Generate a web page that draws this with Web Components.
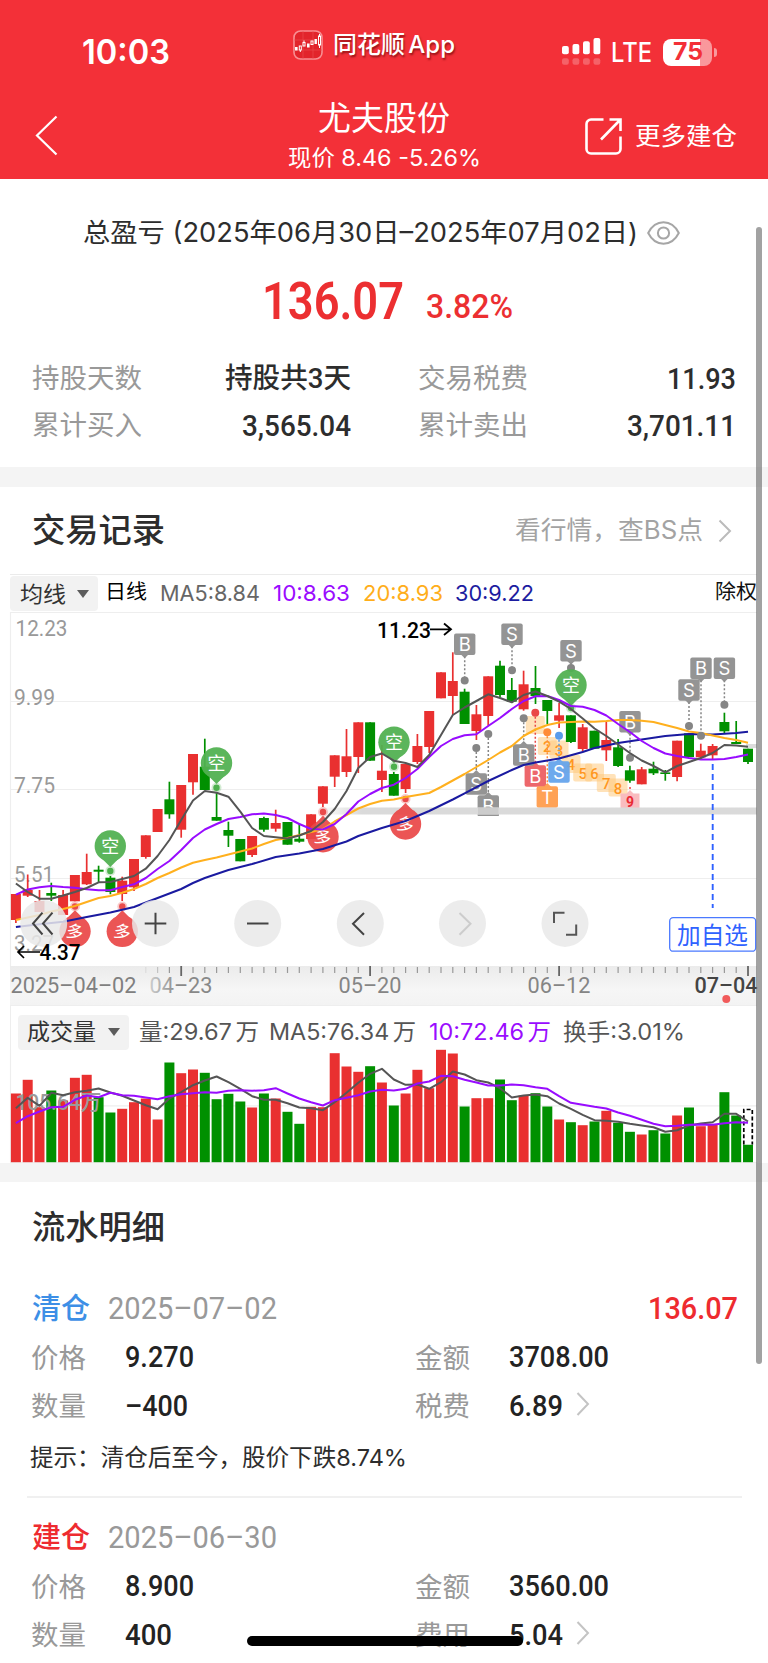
<!DOCTYPE html>
<html lang="zh-CN">
<head>
<meta charset="utf-8">
<title>尤夫股份</title>
<style>
html,body{margin:0;padding:0;background:#fff}
body{width:768px;height:1663px;overflow:hidden;font-family:Inter,"Noto Sans CJK SC",sans-serif;color:#2d2d2d}
</style>
</head>
<body>
<trade-page></trade-page>
<script>
const define = (name, html, extra) => {
  const t = document.createElement('template');
  t.innerHTML = html;
  customElements.define(name, class extends HTMLElement {
    constructor() { super(); this.attachShadow({mode: 'open'}).append(t.content.cloneNode(true)); if (extra) extra.call(this, this.shadowRoot); }
  });
};

/* ---------- page ---------- */
define('trade-page', `
<style>
:host{display:block;position:relative;width:768px;height:1663px;overflow:hidden;background:#fff}
.band{height:20px;background:#f4f4f4}
.scroll{position:absolute;left:756px;top:227px;width:6px;height:1137px;border-radius:3px;background:rgba(110,110,110,.64)}
.home{position:absolute;left:247px;top:1636px;width:276px;height:10px;border-radius:5px;background:#000}
</style>
<status-bar></status-bar>
<nav-bar></nav-bar>
<profit-summary></profit-summary>
<div class="band"></div>
<record-head></record-head>
<price-chart></price-chart>
<volume-chart></volume-chart>
<div class="band" style="height:19px"></div>
<flow-list></flow-list>
<div class="scroll"></div>
<div class="home"></div>`);

/* ---------- status bar ---------- */
define('status-bar', `
<style>
:host{display:flex;align-items:center;height:100px;padding-top:2px;background:#f33038;color:#fff}
.t{margin:1px 0 0 82px}
.app{display:flex;align-items:center;width:162px;margin:-14px 0 0 123px;gap:10px;text-shadow:1px 2px 2px rgba(90,0,0,.6)}
.sig{margin:-1px 0 0 107px}
.lte{margin-left:10px}
.bat{margin-left:11px;position:relative;width:49px;height:27px;border-radius:8px;background:linear-gradient(90deg,#fff 37px,rgba(255,255,255,.5) 37px);display:flex;align-items:center;justify-content:center}
.nub{width:3px;height:9px;margin-left:1.5px;border-radius:0 3px 3px 0;background:rgba(255,255,255,.5)}
svg{display:block}
</style>
<fit-text class="t" w="88" size="33.5" weight="600">10:03</fit-text>
<div class="app">
<svg width="30" height="30" viewBox="0 0 30 30"><rect x="1" y="1" width="28" height="28" rx="6.5" fill="#e2242b" stroke="#f88f93" stroke-width="1.6"/><path d="M1 10h28M1 20h28M10 1v28M20 1v28" stroke="#ef4d52" stroke-width=".6"/><g fill="#fff"><rect x="2" y="17" width="2.6" height="3.5"/><rect x="14" y="13.500" width="2.600" height="4"/><rect x="21.500" y="9" width="2.400" height="5"/></g><g fill="none" stroke="#fff" stroke-width="1"><rect x="6.300" y="16" width="2" height="4"/><rect x="10" y="12.500" width="2" height="3.500"/><rect x="18" y="11" width="2" height="3.500"/><rect x="25.500" y="6" width="2" height="9"/><path d="M7.300 20v2M11 10.500v2M26.500 4v2M26.500 15v3"/></g></svg>
<fit-text w="122" size="24" weight="500" style="word-spacing:-3px">同花顺 App</fit-text>
</div>
<svg class="sig" width="39" height="27" viewBox="0 0 39 27"><g fill="#fff"><rect x="0" y="8" width="6.800" height="8.300" rx="2"/><rect x="10.500" y="6" width="6.800" height="10.300" rx="2"/><rect x="21" y="3.300" width="6.800" height="13" rx="2"/><rect x="31.500" y="0" width="6.800" height="16.300" rx="2"/></g><g fill="#fff" opacity=".24"><rect x="0" y="20.300" width="6.800" height="6.400" rx="2"/><rect x="10.500" y="20.300" width="6.800" height="6.400" rx="2"/><rect x="21" y="20.300" width="6.800" height="6.400" rx="2"/><rect x="31.500" y="20.300" width="6.800" height="6.400" rx="2"/></g></svg>
<fit-text class="lte" w="41" size="26.500" weight="500" style="margin-top:1px">LTE</fit-text>
<div class="bat"><fit-text w="30" size="24" weight="700" style="color:#f33038">75</fit-text></div><div class="nub"></div>`);

/* ---------- navigation bar ---------- */
define('nav-bar', `
<style>
:host{display:grid;grid-template-columns:258px 252px 1fr;height:77px;background:#f33038;color:#fff}
svg{display:block}
.back{margin:13px 0 0 35px}
.mid{display:flex;flex-direction:column;align-items:center;gap:12px}
.more{display:flex;align-items:flex-start;padding:16px 0 0 74.500px;gap:13px}
</style>
<svg class="back" width="24" height="41" viewBox="0 0 24 41"><path d="M21.500 1.500L2 20.500L21.500 39.500" fill="none" stroke="#fff" stroke-width="2.200"/></svg>
<div class="mid"><fit-text w="132" size="33">尤夫股份</fit-text><fit-text w="193" size="22.500">现价 8.46 -5.26%</fit-text></div>
<div class="more"><svg width="37" height="37" viewBox="0 0 37 37" fill="none" stroke="#fff" stroke-width="2.600"><path d="M18.500 1.500H6a4.500 4.500 0 0 0-4.500 4.500V31a4.500 4.500 0 0 0 4.500 4.500H31a4.500 4.500 0 0 0 4.500-4.500V18.500"/><path d="M24.500 1.500H35.500V13M35 2L16 21.500"/></svg><fit-text w="102" size="25.500" style="margin-top:5px">更多建仓</fit-text></div>`);

/* ---------- profit summary ---------- */
define('profit-summary', `
<style>
:host{display:block;height:288px}
.title{display:flex;align-items:center;height:27px;padding:40px 0 0 83px;gap:9px}
.sum{display:flex;align-items:flex-end;height:51px;padding:30px 0 0 262px;gap:22px;color:#ec2f31}
.grid{display:grid;grid-template-columns:110px 1fr 67px 110px 1fr;row-gap:18px;padding:38px 32px 0 32px}
.l{color:#999}.r{justify-self:end}.c4{grid-column:4}
</style>
<div class="title"><fit-text w="555" size="26.500">总盈亏 (2025年06月30日–2025年07月02日)</fit-text>
<svg width="33" height="24" viewBox="0 0 33 24" fill="none" stroke="#a6a6a6" stroke-width="2"><path d="M1.200 12C4.500 5.500 10 1.300 16.500 1.300S28.500 5.500 31.800 12C28.500 18.500 23 22.700 16.500 22.700S4.500 18.500 1.200 12Z"/><circle cx="16.500" cy="12" r="5.600"/></svg></div>
<div class="sum"><fit-text w="142" size="51" weight="600" f="d">136.07</fit-text><fit-text w="87" size="33.500" weight="500" f="d" style="margin-bottom:4px">3.82%</fit-text></div>
<div class="grid">
<fit-text class="l" w="110" size="27">持股天数</fit-text><fit-text class="r" w="126" size="28" weight="500" f="d">持股共3天</fit-text><fit-text class="l c4" w="110" size="27">交易税费</fit-text><fit-text class="r" w="69" size="29" weight="500" f="d">11.93</fit-text>
<fit-text class="l" w="110" size="27">累计买入</fit-text><fit-text class="r" w="109" size="29" weight="500" f="d">3,565.04</fit-text><fit-text class="l c4" w="110" size="27">累计卖出</fit-text><fit-text class="r" w="109" size="29" weight="500" f="d">3,701.11</fit-text>
</div>`);

/* ---------- section heading ---------- */
define('record-head', `
<style>
:host{display:flex;align-items:center;height:87px;padding:0 36px 0 32px}
fit-text+fit-text{margin-left:auto;color:#a3a3a3}
svg{margin-left:15px}
</style>
<fit-text w="133" size="33" weight="500">交易记录</fit-text><fit-text w="188" size="25">看行情，查BS点</fit-text>
<svg width="14" height="24" viewBox="0 0 14 24"><path d="M1.500 1.500L12 12L1.500 22.500" fill="none" stroke="#bbb" stroke-width="2"/></svg>`);

/* ---------- chip with a drop-down mark ---------- */
define('drop-chip', `
<style>
:host{display:flex;align-items:center;justify-content:center;gap:11px;height:35px;background:#f2f2f2;border-radius:4px;color:#333}
i{border:6px solid transparent;border-top:8px solid #5c5c5c;border-bottom:0}
</style><slot></slot><i></i>`);

/* ---------- chart geometry ---------- */
const X = i => +(15.9 + 11.808 * i).toFixed(1);
const R = '#e93030', G = '#009000';
const line = (ys, c, f = y => y) => `<polyline points="${ys.map((y, i) => y == null ? '' : X(i) + ',' + (+f(y).toFixed(1))).filter(Boolean).join(' ')}" fill="none" stroke="${c}" stroke-width="2" stroke-linejoin="round"/>`;
const txt = (x, y, w, s, c, size = 22, weight = 400, fam = 'Roboto') => `<text x="${x}" y="${y}" textLength="${w}" lengthAdjust="spacingAndGlyphs" fill="${c}" font-size="${size}" font-weight="${weight}" font-family="${fam},Noto Sans CJK SC,sans-serif">${s}</text>`;

/* colour, body top, body bottom, high, low */
const candles = [
'r 894 920 894 923','r 890 895.7 874.5 897','r 901 912 890 912','g 893 895.7 882.7 901','r 895 915 890 915','r 875 901.3 875 901.3','r 872 884.3 853.7 885','g 869.7 871.7 865.7 882.3','g 877.7 892 876 894.3','r 880.7 894 876.7 901','r 859 887.3 859 891','r 835.3 857 835.3 858.7','r 809 832 809 832','g 799.3 814.3 781.7 818.7','r 785 829.7 785 837.7','r 754 782.3 754 794.7','g 766.7 790 738.7 790','g 817 820.7 793 820.7','g 830 835.7 821.7 847','g 839 861.3 839 861.3','r 836 855 836 857','g 818 829.7 816.7 831.7','r 823 828.7 809.7 831.7','g 822 844.7 822 844.7','g 838.7 841.7 823.3 842.7','r 814.3 839 814.3 839','r 786.3 803.7 786.3 807','r 755.3 776.7 755.3 787','r 756.3 772 729 777','r 722.3 757 722.3 773','g 722.3 760.7 722.3 760.7','r 770.7 780 745 792','g 774 795.7 772 795.7','r 764 789 764 793','r 746 762 734 764','r 711 747 711 753','r 672.3 698.3 672.3 698.3','r 681 696 652.3 715','g 691.7 724 688.7 724','r 714.3 731 705 740','r 676.3 716 676.3 725.7','g 665.7 695 660.7 697','g 690 701.7 678 702.7','r 684.3 709.3 670.7 710.7','g 688 696 666 704','g 700 711 700 724','r 715.3 720.7 703 728','g 715.3 742 715.3 743','r 727.3 749 724 751.7','g 730.7 748.7 730.7 748.7','r 740 750.3 722 761','g 747.3 766 739 767','g 770.3 780.7 765.7 782.7','r 769.3 784.3 767 784.3','g 768.7 773.3 761.7 775','g 772.4 774 770 780.7','r 740.7 777 740.7 781.3','g 733.3 757 733.3 757','r 750.7 757.3 743.7 760','r 746 755.3 744 759.3','g 722 731.3 712.7 733','g 742 744 721 744','g 748.7 762 748.7 764'];
const ma5 = [883.5,892,898.7,898.7,895.5,892,888,882.3,882,879,876,868.7,856,840,820,800.5,791,792.7,796.7,811.7,828,836,837.3,838.5,835.5,831,822,809,791,768,757,753.5,760.7,763,767,755,735,715,707.5,701,694.3,698,702.3,695,691.5,696,701.7,709,718.5,728.5,736,744.5,753,760.5,766,772.3,766,762,758,753,745,745.5,746.7];
const ma10 = [894.7,889.5,887.3,886,887,887.7,889.3,890.3,890.3,887,884.3,878,869,861,850,838,829.5,824,819,817,814.3,813.5,815,818,824,829,829.5,824,814,801.5,794,788,784.7,778,769,757,746,739,735.3,734.3,726,718,709,701,696.3,696,700,706,706.7,710,715.5,724,732,741,748,753.5,756,758,759.5,759.5,759,757,754.5];
const ma20 = [920,917.5,915,911.5,909,906,902,898,896,892.7,889,884,878,873,867.5,862.7,860,857.5,854.5,851.5,848.5,844,840,838,835,832,829,821.5,815,808.5,804,800.7,799.5,797,795,793,787,780.5,774,767,760,752.5,746,736,729.5,725,722.5,722,721.5,721.7,721,720,720,720.7,722,725,728,731.5,733,735.5,738,740,742.7];
const ma30 = [927,,924.3,,921.7,,917,,912.5,,907,,898,,889,883,878,,870,,864,,857,,853.5,,849,,841.5,836,,828,,821,,811,,799.5,793.3,,781,,770,765,762.500,,758.5,,752,748,,743,,739.5,,736,,734,,734.5,,733,731.7];

const kong = (x, y, d) => `<circle cx="${x}" cy="${d}" r="5" fill="#4db04d" opacity=".25"/><circle cx="${x}" cy="${d}" r="3.200" fill="#4db04d"/><g opacity=".94"><path d="M${x - 9} ${y + 12}L${x} ${y + 21}L${x + 9} ${y + 12}Z" fill="#51b151"/><circle cx="${x}" cy="${y}" r="15.700" fill="#51b151"/></g>` + txt(x - 9, y + 6.500, 18, '空', '#fff', 18);
const duo = (x, y, d) => `<circle cx="${x}" cy="${d}" r="5" fill="#e93030" opacity=".25"/><circle cx="${x}" cy="${d}" r="3.200" fill="#ea4b4b"/><g opacity=".92"><path d="M${x - 9} ${y - 12}L${x} ${y - 21}L${x + 9} ${y - 12}Z" fill="#ea4747"/><circle cx="${x}" cy="${y}" r="15.700" fill="#ea4747"/></g>` + `<g transform="rotate(12 ${x} ${y})">` + txt(x - 8.500, y + 6.500, 17, '多', '#fff', 17) + '</g>';
const tag = (x, y, s, d, c = '#8c8c8c', dot = '#858585') => {
  const up = d < y, from = up ? d : y + 12, to = up ? y - 12 : d;
  return `<path d="M${x} ${from}V${to}" stroke="${dot}" stroke-width="1.500" stroke-dasharray="2 2"/><circle cx="${x}" cy="${d}" r="4" fill="${dot}"/>` +
  `<g opacity=".93"><path d="${up ? `M${x - 4} ${y - 10}l4 -4l4 4` : `M${x - 4} ${y + 10}l4 4l4 -4`}z" fill="${c}"/><rect x="${x - 10.700}" y="${y - 10.700}" width="21.400" height="21.400" rx="2" fill="${c}"/></g><text x="${x}" y="${y + 6.800}" text-anchor="middle" fill="#fff" font-size="18.500" font-family="Inter">${s}</text>`;
};
const num = (x, y, s) => `<rect x="${x - 9.500}" y="${y - 9.500}" width="19" height="18" rx="2" fill="#ffc878" opacity=".52"/>${s && `<text x="${x}" y="${y + 5.500}" text-anchor="middle" fill="#ff971f" font-size="15" font-weight="500" font-family="Roboto">${s}</text>`}`;
const round = (x, p, c = '#444') => `<circle cx="${x}" cy="923.400" r="23.500" fill="#e9e9e9" opacity=".85"/><path d="${p}" fill="none" stroke="${c}" stroke-width="2"/>`;

define('price-chart', `
<style>
:host{display:block}
.head{display:flex;align-items:center;height:37px;margin:0 11px 0 10px;border-top:1px solid #ebebeb}
.head>fit-text{position:relative;top:-1px}
drop-chip{width:88px}
.ex{margin-left:auto;color:#111}
svg{display:block}
</style>
<div class="head">
<drop-chip><fit-text w="46" size="22">均线</fit-text></drop-chip>
<fit-text w="42" size="20.500" style="margin-left:7px;color:#000">日线</fit-text>
<fit-text w="100" size="22" style="margin-left:13px;color:#666">MA5:8.84</fit-text>
<fit-text w="77" size="22" style="margin-left:13px;color:#9a0cff">10:8.63</fit-text>
<fit-text w="80" size="22" style="margin-left:13px;color:#ffae1a">20:8.93</fit-text>
<fit-text w="79" size="22" style="margin-left:12px;color:#1c1ca0">30:9.22</fit-text>
<fit-text class="ex" w="42" size="20.500">除权</fit-text>
</div><div class="plot"></div>`, function (root) {
  let s = `<svg width="768" height="393" viewBox="0 612 768 393"><defs><linearGradient id="a" x2="0" y2="1"><stop stop-color="#ebebeb"/><stop offset=".6" stop-color="#f6f6f6"/><stop offset="1" stop-color="#f3f3f3"/></linearGradient><linearGradient id="f"><stop stop-color="#dadada" stop-opacity="0"/><stop offset=".1" stop-color="#dadada"/></linearGradient><linearGradient id="k"><stop stop-color="#ccc"/><stop offset=".45" stop-color="#888"/></linearGradient><clipPath id="c"><rect x="0" y="612" width="768" height="204"/></clipPath></defs>`;
  s += `<path d="M10 612.500H757M10.500 612V966M10 701.500H757M10 789.500H757M10 878.500H757" stroke="#eee" stroke-width="1.200" fill="none"/>`;
  s += txt(15.500, 635.700, 52, '12.23', '#999') + txt(14, 704.500, 41, '9.99', '#999') + txt(14, 792.500, 41, '7.75', '#999') + txt(14, 881.500, 40, '5.51', '#999') + txt(14, 950.500, 40, '3.27', '#999');
  [[535.3,725.500,''],[547.3,746.500,'2'],[559,750,'3'],[571,764.500,'4'],[582.7,773,'5'],[594.5,773,'6'],[606.3,783.500,'7'],[618,788,'8']].forEach(a => s += num(...a));
  s += `<path d="M630 787V796" stroke="#e94040" stroke-width="1.500" stroke-dasharray="2 2"/><path d="M620.500 793.500H626.500L630 790L633.500 793.500H639.500V808.500H620.500Z" fill="#f9bcbf"/><text x="630" y="807" text-anchor="middle" fill="#e92a35" font-size="14" font-weight="700" font-family="Roboto">9</text>`;
  candles.forEach((l, i) => {
    const [c, t, b, h, w] = l.split(' '), x = X(i), k = c === 'r' ? R : G;
    s += `<path d="M${x} ${h}V${w}" stroke="${k}" stroke-width="1.700"/><rect x="${x - 5}" y="${t}" width="10" height="${+(b - t).toFixed(1)}" fill="${k}"/>`;
  });
  const fill = a => Array.from(a, v => v === undefined ? null : v);
  s += tag(630, 721.700, 'B', 757.700);
  s += tag(571, 650.700, 'S', 668);
  s += tag(535.300, 776, 'B', 712.700, '#ec5c60', '#ea4747') + tag(547.300, 797, 'T', 732.300, '#ff9b4a', '#ff8c38') + tag(559, 772, 'S', 735.700, '#62a3ec', '#5a9bea');
  s += tag(523.700, 755, 'B', 718.300) + tag(476.300, 784, 'S', 748) + `<g clip-path="url(#c)">${tag(488.300, 806, 'B', 734)}</g>`;
  s += `<rect x="318" y="807.500" width="439" height="7" fill="url(#f)"/><rect x="746" y="744" width="11" height="4" fill="#ddd"/><rect x="478" y="807.500" width="20.500" height="7" fill="#ccc"/>`;
  s += `<path d="M712.700 764V908" stroke="#2f62ff" stroke-width="1.900" stroke-dasharray="6 4"/>`;
  s += kong(110.300, 846, 871) + kong(216.500, 763, 787.700) + kong(394, 742.300, 766.700) + kong(571, 685, 708);
  s += duo(75, 931.300, 906.500) + duo(122.300, 931.300, 906.500) + duo(323, 836.700, 812) + duo(405.500, 824, 799);
  s += line(fill(ma30), '#1a1aa0') + line(ma20, '#ffb01e') + line(ma10, '#980cff') + line(ma5, '#555');
  s += tag(464.700, 644.300, 'B', 680.500) + tag(512, 634.300, 'S', 670.300);
  s += tag(701, 668.300, 'B', 735.700) + tag(689, 690, 'S', 726) + tag(724.400, 668.300, 'S', 704.700);
  s += txt(377, 637.500, 54, '11.23', '#000', 22.500, 500) + `<path d="M430 629.300H451M444 623.500L451 629.300L444 635" fill="none" stroke="#000" stroke-width="1.800"/>`;
  s += round(43.700, 'M42.500 912.700L33 923.500L42.500 934.500M52.500 912.700L43 923.500L52.500 934.500') + round(155.500, 'M155.500 912.700V934.300M144.700 923.500H166.300') + round(257.700, 'M247 923.500H268.500') + round(360.300, 'M364 913L353 923.800L364 934.700') + round(462.500, 'M459.500 913L470.500 923.800L459.500 934.700', '#ccc') + round(565, 'M554 923V912.800H564.500M566 934.700H576.200V924.500', '#555');
  s += txt(39.500, 959.800, 41, '4.37', '#000', 22.500, 500) + `<path d="M40 952H18M24 946L18 952L24 958" fill="none" stroke="#000" stroke-width="1.700"/>`;
  s += `<rect x="669.700" y="917.700" width="86" height="33.500" rx="3.500" fill="#fff" stroke="#4a79ff" stroke-width="1.300"/>` + txt(677, 943.500, 71, '加自选', '#2f62ff', 23.500);
  s += `<rect x="10" y="966" width="747" height="39" fill="url(#a)"/>`;
  for (let i = 11; i < 63; i++) {
    const m = (i - 14) % 16 === 0;
    s += `<path d="M${X(i)} ${m ? '966V976' : '967V973'}" stroke="${m ? '#666' : '#999'}" stroke-width="${m ? 1.800 : 1.200}" opacity="${i === 11 ? .2 : i === 12 ? .5 : 1}"/>`;
  }
  s += txt(10.500, 993.300, 126, '2025–04–02', '#808080') + txt(149.500, 993.300, 63, '04–23', 'url(#k)') + txt(338.500, 993.300, 63, '05–20', '#858585') + txt(527.500, 993.300, 63, '06–12', '#858585') + txt(694.500, 993.300, 63, '07–04', '#444', 22, 500);
  s += `<circle cx="726.300" cy="999" r="4" fill="#f15b5b"/></svg>`;
  root.querySelector('.plot').innerHTML = s;
});

const vols = 'r282 r241 r323 g273 r303 r235 r226 g293 g339 r328 r308 r297 r360 g189 r221 r210 g220 g299 g283 g306 r324 g282 r297 g337 g373 r322 r323 r161 r201 r217 g200 r249 g318 r282 r211 r266 r151 r162 g321 r296 r296 g240 g302 r288 g281 g321 r360 g368 r377 g366 r334 g370 g397 r405 g392 g402 r348 g324 r380 r374 g278 g348 g435'.split(' ');
const v5 = [326,295,319,280,287,278,274,267,279,289,303,317,329,297,278,257,243,231,248,268,290,301,301,311,324,326,332,308,280,250,223,208,240,256,255,268,248,216,225,242,249,266,294,288,285,290,312,328,346,362,364,367,373,378,383,397,392,378,372,368,343,343,366];
const v10 = [371,350,336,323,322,301,288,293,280,287,289,294,299,290,284,281,278,280,274,272,274,272,266,282,297,308,318,302,295,287,276,271,273,268,252,246,229,230,241,249,258,258,255,257,263,268,290,310,316,322,327,339,349,361,373,380,379,376,375,376,371,368,370];

define('volume-chart', `
<style>
:host{display:block;color:#555}
.head{display:flex;align-items:center;height:44px;padding:4px 0 0 7px;margin:0 11px 0 10px;border:1px solid #eee;border-width:1px 0 0 1px}
drop-chip{width:111px;gap:12px}
svg{display:block;overflow:visible}
</style>
<div class="head">
<drop-chip><fit-text w="69" size="22.500">成交量</fit-text></drop-chip>
<fit-text w="120" size="22.500" style="margin-left:10px;word-spacing:-3px">量:29.67 万</fit-text>
<fit-text w="147" size="22.500" style="margin-left:10px;word-spacing:-3px">MA5:76.34 万</fit-text>
<fit-text w="122" size="22.500" style="margin-left:13px;color:#9a0cff;word-spacing:-3px">10:72.46 万</fit-text>
<fit-text w="122" size="22.500" style="margin-left:12px">换手:3.01%</fit-text>
</div><div class="plot"></div>`, function (root) {
  const y = v => 1000 + v / 3;
  let s = `<svg width="768" height="109" viewBox="0 1054.500 768 109"><path d="M10 1106.300H757M10.500 1050V1163M10 1163H757" stroke="#eee" stroke-width="1.200"/>`;
  vols.forEach((v, i) => { const t = +y(+v.slice(1)).toFixed(1); s += `<rect x="${(X(i) - 5).toFixed(1)}" y="${t}" width="10" height="${(1162.7 - t).toFixed(1)}" fill="${v[0] === 'r' ? R : G}"/>`; });
  s += `<rect x="743.800" y="1110" width="8.500" height="35" fill="#fff"/><path d="M743.800 1145V1110H752.300V1145" fill="none" stroke="#000" stroke-width="1.700" stroke-dasharray="4 2.300"/>`;
  s += txt(15.500, 1110.800, 86, '105.64万', '#9b9b9b', 22, 500) + line(v5, '#555', y) + line(v10, '#980cff', y) + '</svg>';
  root.querySelector('.plot').innerHTML = s;
});

/* ---------- list of entries ---------- */
define('flow-list', `
<style>
:host{display:block;height:480px}
h2{margin:0;padding:29px 0 0 32px;height:33px;font-weight:400;display:flex}
hr{margin:27px 26px 23px 27px;border:0;height:2px;background:#f0f0f0}
.tip{display:flex;margin:24px 0 0 30px}
</style>
<h2><fit-text w="133" size="33" weight="500">流水明细</fit-text></h2>
<flow-item style="margin-top:48px"><fit-text slot="kind" w="58" size="29" weight="500" style="color:#3d8fe6">清仓</fit-text><fit-text slot="date" w="169" size="32" f="d">2025–07–02</fit-text><fit-text slot="gain" w="90" size="32" weight="500" f="d">136.07</fit-text>
<fit-text slot="price" w="69" size="29.500" weight="500" f="d">9.270</fit-text><fit-text slot="amount" w="100" size="29.500" weight="500" f="d">3708.00</fit-text><fit-text slot="qty" w="63" size="29.500" weight="500" f="d">–400</fit-text><fit-text slot="feename" w="55" size="27">税费</fit-text><fit-text slot="fee" w="54" size="29.500" weight="500" f="d">6.89</fit-text></flow-item>
<div class="tip"><fit-text w="377" size="23.500">提示：清仓后至今，股价下跌8.74%</fit-text></div>
<hr>
<flow-item><fit-text slot="kind" w="58" size="29" weight="500" style="color:#ee2b2f">建仓</fit-text><fit-text slot="date" w="169" size="32" f="d">2025–06–30</fit-text>
<fit-text slot="price" w="69" size="29.500" weight="500" f="d">8.900</fit-text><fit-text slot="amount" w="100" size="29.500" weight="500" f="d">3560.00</fit-text><fit-text slot="qty" w="47" size="29.500" weight="500" f="d">400</fit-text><fit-text slot="feename" w="55" size="27">费用</fit-text><fit-text slot="fee" w="54" size="29.500" weight="500" f="d">5.04</fit-text></flow-item>`);

define('flow-item', `
<style>
:host{display:block;color:#232323}
.top{display:flex;align-items:center;height:32px;padding:0 30px 0 32px}
.date{margin-left:18px;color:#999}.gain{margin-left:auto;color:#ee2b2f}
.g{display:grid;grid-template-columns:94px 290px 94px 1fr;row-gap:18.500px;align-items:center;padding:19px 0 0 31px}
.g>*{height:30px;display:flex;align-items:center}
.l{color:#999}
.fee svg{margin-left:13px;margin-top:-5px}
</style>
<div class="top"><slot name="kind"></slot><span class="date"><slot name="date"></slot></span><span class="gain"><slot name="gain"></slot></span></div>
<div class="g"><div class="l"><fit-text w="55" size="27">价格</fit-text></div><div><slot name="price"></slot></div><div class="l"><fit-text w="55" size="27">金额</fit-text></div><div><slot name="amount"></slot></div>
<div class="l"><fit-text w="55" size="27">数量</fit-text></div><div><slot name="qty"></slot></div><div class="l"><slot name="feename"></slot></div><div class="fee"><slot name="fee"></slot><svg width="14" height="24" viewBox="0 0 14 24"><path d="M1.500 1L12 12L1.500 23" fill="none" stroke="#c4c4c4" stroke-width="2"/></svg></div></div>`);

/* ---------- one line of text condensed or widened to a set width ---------- */
customElements.define('fit-text', class extends HTMLElement {
  connectedCallback() {
    if (this.shadowRoot) return;
    const n = this.getAttribute('f') === 'd' ? 'Roboto' : 'Inter';
    const s = +this.getAttribute('size'), w = +this.getAttribute('w');
    this.attachShadow({mode: 'open'}).innerHTML = `<style>
:host{display:inline-block;flex:none;width:${w}px;height:${s}px;font:${this.getAttribute('weight') || 400} ${s}px/${s}px ${n},"Noto Sans CJK SC",sans-serif;white-space:nowrap}
span{display:inline-block;transform-origin:0 50%}</style><span><slot></slot></span>`;
    const e = this.shadowRoot.querySelector('span');
    e.style.transform = `scaleX(${(w / e.getBoundingClientRect().width).toFixed(4)})`;
  }
});
</script>
</body>
</html>
